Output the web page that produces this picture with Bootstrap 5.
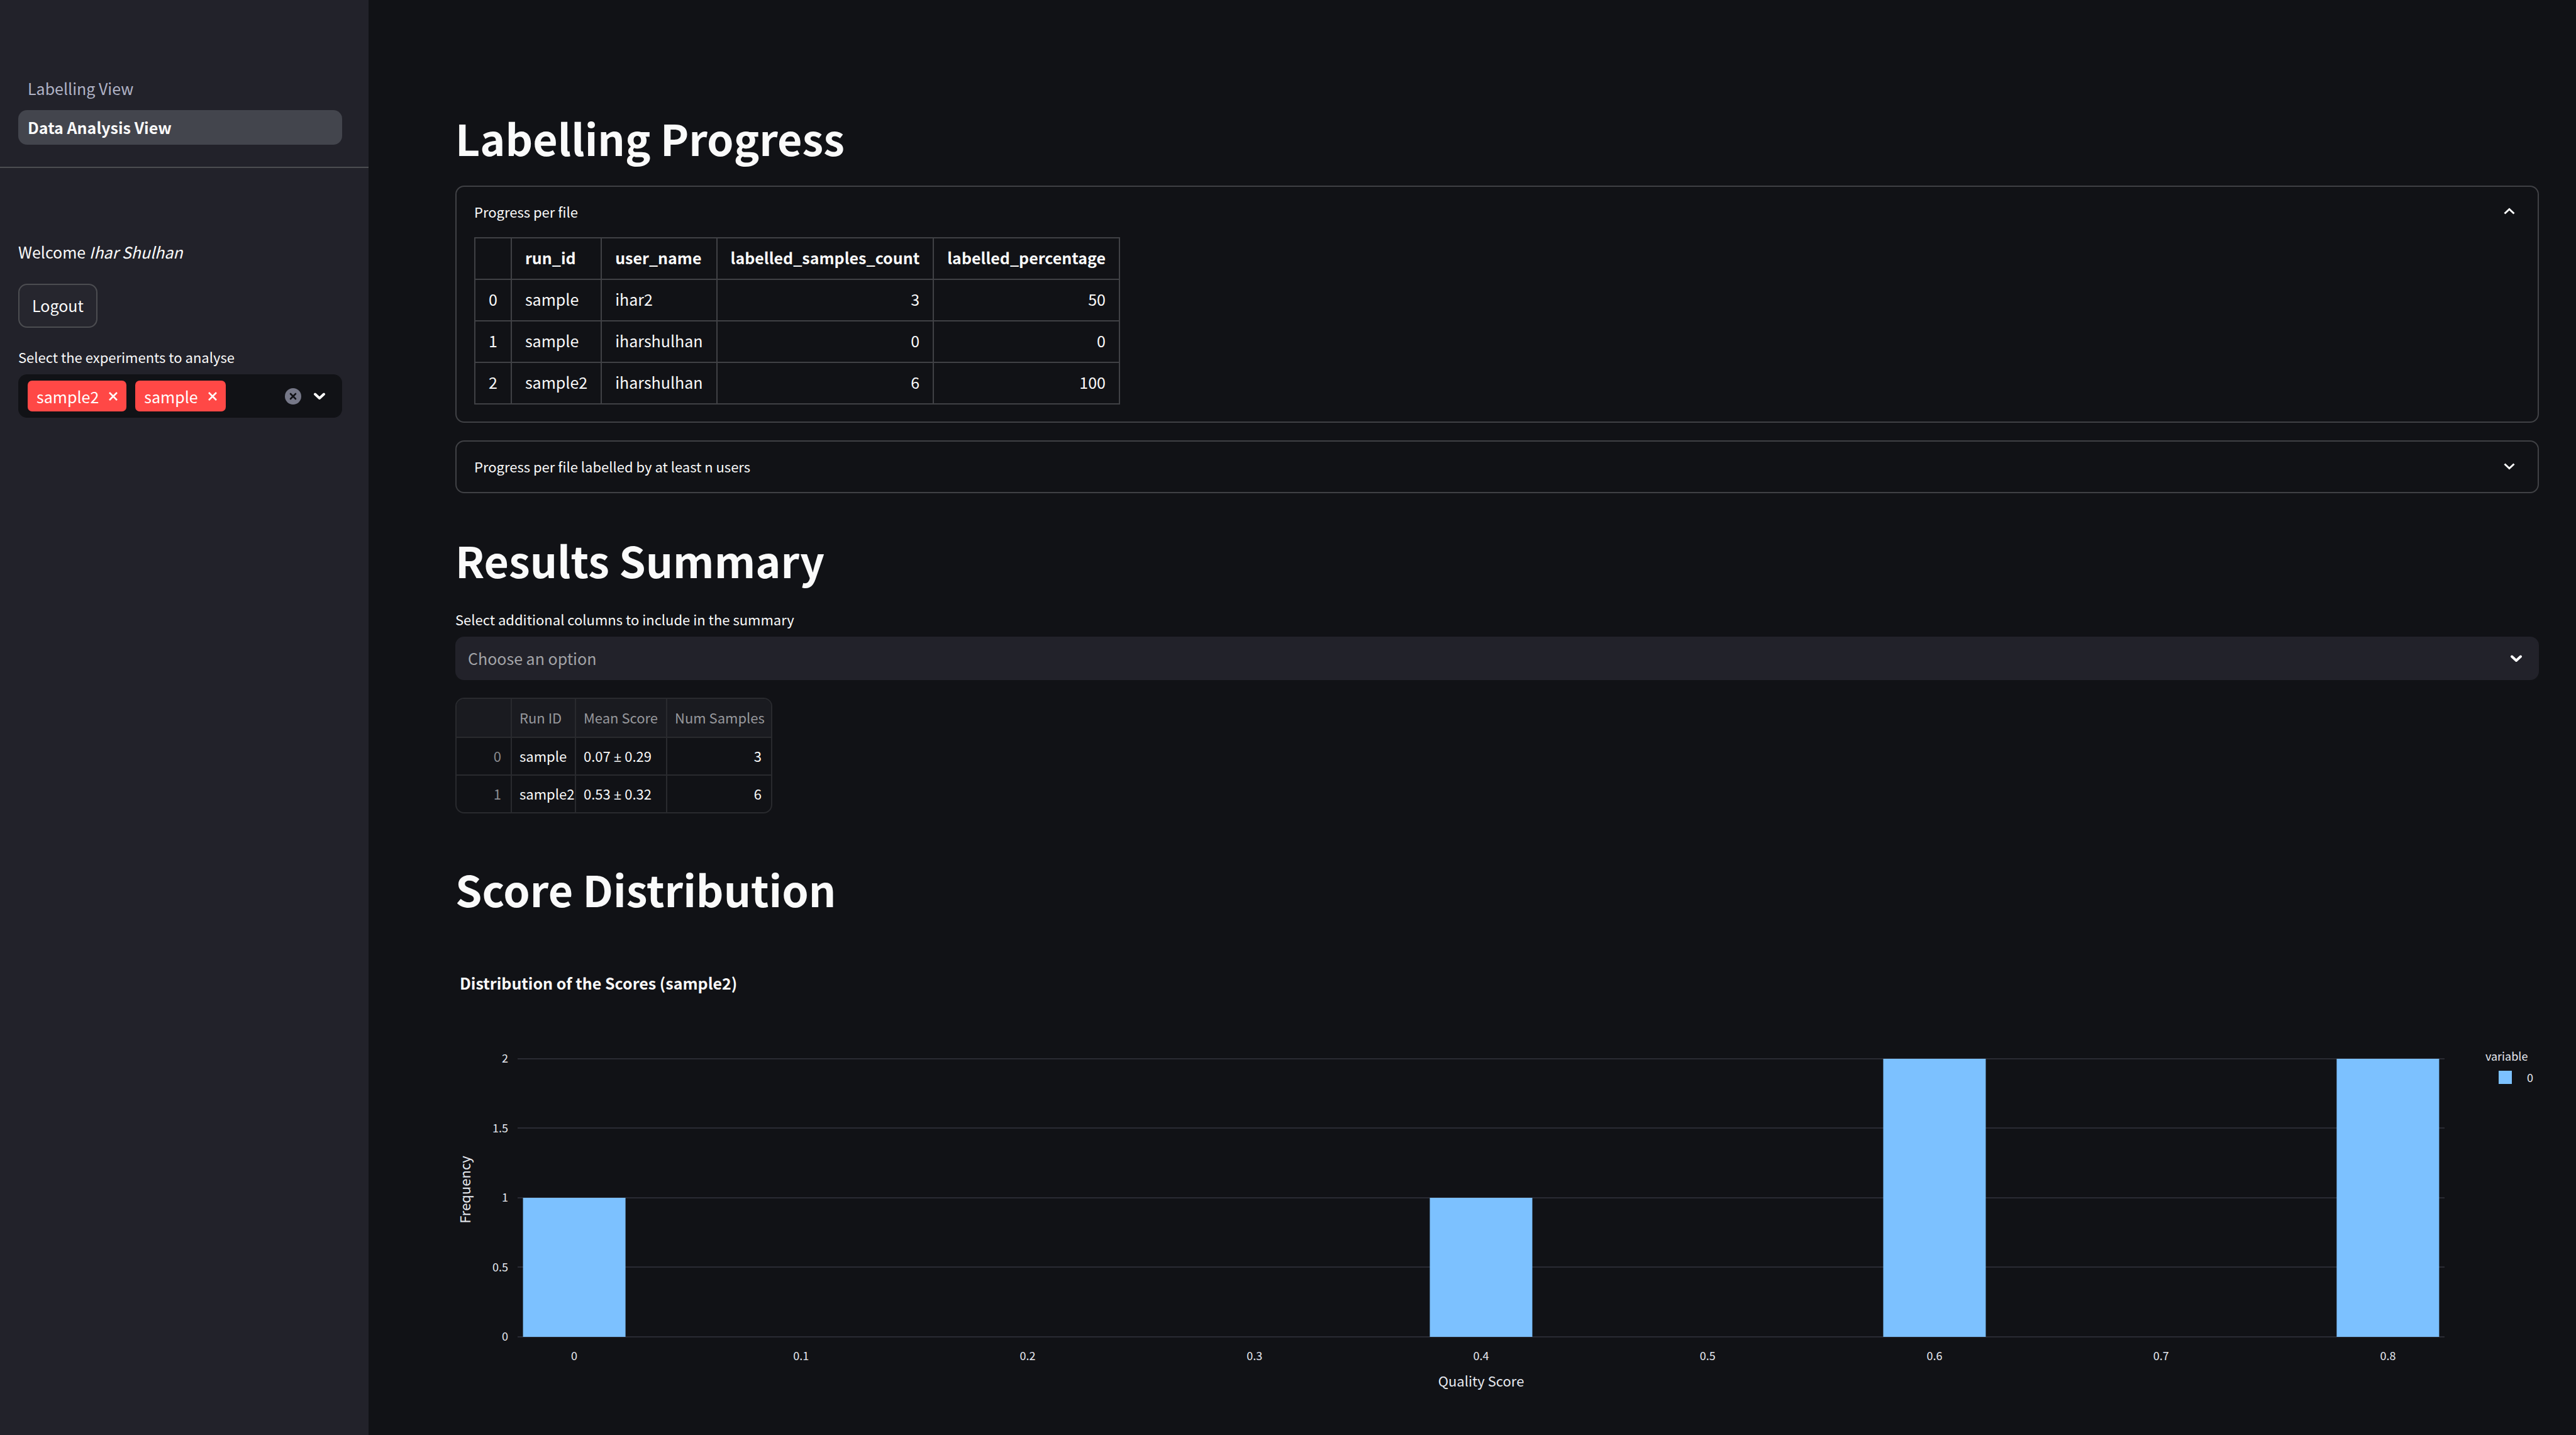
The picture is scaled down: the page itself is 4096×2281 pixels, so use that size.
<!DOCTYPE html>
<html lang="en">
<head>
<meta charset="utf-8">
<meta name="viewport" content="width=device-width, initial-scale=1">
<title>Data Analysis View</title>
<link href="https://cdn.jsdelivr.net/npm/bootstrap@5.3.0/dist/css/bootstrap.min.css" rel="stylesheet">
<style>
:root { --page: #111216; --panel: #22222a; --rule: #404145; --ink: #fafafa; --accent: #ff4846; --bar: #7cc1ff; }
body { background: var(--page); color: var(--ink); font-family: "Noto Sans CJK SC", "Noto Sans", sans-serif; font-size: 25px; line-height: 38px; }
.side-panel { flex: 0 0 586px; min-width: 0; background: var(--panel); }
.side-nav { padding: 113px 42px 35px 29px; border-bottom: 2px solid #4c4d51; }
.side-nav .nav-link { color: #b0b3c6; padding: 8px 15px; line-height: 39px; border-radius: 14px; }
.side-nav .nav-link + .nav-link { margin-top: 7px; }
.side-nav .nav-link.active { background: #43454d; color: var(--ink); font-weight: 700; }
.side-body { padding: 114px 42px 0 29px; }
.logout-btn { color: var(--ink); background: #26262e; border: 2px solid #4c4d51; border-radius: 14px; font-size: 25px; line-height: 38px; padding: 13px 20px 15px; margin: 32px 0 28px; }
.small-label { font-size: 22px; line-height: 36px; margin-bottom: 10px; }
.multi-box { height: 69px; background: var(--page); border-radius: 14px; padding: 0 27px 0 15px; }
.multi-box input { width: 0; min-width: 0; background: transparent; border: 0; outline: 0; color: var(--ink); }
.tag-chip { height: 49px; background: var(--accent); color: #fff; border-radius: 7px; padding: 0 14px; margin-right: 14px; gap: 16px; }
.plain-btn { background: none; border: 0; padding: 0; color: inherit; }
.plain-btn svg, .expander svg { display: block; }
.main-area { padding: 173px 59px 40px 138px; min-width: 0; }
.page-title { font-size: 68px; line-height: 92px; font-weight: 700; margin: 0 0 30px; }
.expander { border: 2px solid var(--rule); border-radius: 14px; margin-bottom: 28px; }
.expander-head { width: 100%; height: 80px; padding: 0 36px 3px 28px; background: none; border: 0; color: var(--ink); font-size: 22px; line-height: 36px; }
.expander-body { padding: 0 28px 27px; }
.expander + .page-title { margin-top: 60px; }
.progress-grid { border-collapse: collapse; }
.progress-grid th, .progress-grid td { border: 2px solid var(--rule); padding: 11px 21px 15px; line-height: 38px; }
.num-cell { text-align: right; }
.column-select { height: 69px; background-color: var(--panel); color: #a3a4a8; border: 0; border-radius: 14px; font-size: 25px; line-height: 38px; padding: 0 60px 2px 20px; background-size: 18px 12px; background-position: right 27px center;
 background-image: url("data:image/svg+xml,%3csvg xmlns='http://www.w3.org/2000/svg' viewBox='0 0 18 12'%3e%3cpath d='M2 2.5L9 9L16 2.5' fill='none' stroke='%23fff' stroke-width='4' stroke-linecap='round' stroke-linejoin='round'/%3e%3c/svg%3e"); }
.summary-frame { border: 2px solid #292a2e; border-radius: 14px; overflow: hidden; margin: 28px 0 74px; }
.summary-grid { table-layout: fixed; width: 500px; border-collapse: separate; border-spacing: 0; font-size: 22px; line-height: 38px; }
.summary-grid th, .summary-grid td { padding: 9px 0 11px 12px; white-space: nowrap; border-right: 2px solid #292a2e; border-bottom: 2px solid #292a2e; font-weight: 400; }
.summary-grid thead th { background: #1a1b20; color: #97989c; padding-top: 10px; padding-bottom: 12px; }
.summary-grid tbody th { color: #8b8c90; }
.summary-grid tr > :last-child { border-right: 0; }
.summary-grid tbody tr:last-child > * { border-bottom: 0; }
.summary-grid .num-cell { padding-right: 15px; }
.col-index { width: 88px; }
.col-run { width: 102px; }
.col-score { width: 145px; }
.pm-sign { font-family: "Open Sans", sans-serif; line-height: 1; }
.chart-title { font-size: 25px; line-height: 38px; font-weight: 700; margin: 84px 0 101px 7px; }
.axis-name { font-size: 22px; fill: #e6e9f0; }
.tick-name { font-size: 18px; fill: #e6e9f0; }
.chart-box svg { display: block; overflow: visible; }
.y-side { flex: 0 0 99px; }
.legend-side { flex: 0 0 150px; padding-left: 65px; font-size: 18px; line-height: 30px; color: #e6e9f0; }
.legend-name { margin: -19px 0 4px; }
.legend-row { padding-left: 21px; gap: 24px; }
.legend-key { width: 21px; height: 21px; background: var(--bar); }
</style>
</head>
<body>
<div class="d-flex min-vh-100">
  <aside class="side-panel">
    <nav class="side-nav nav flex-column">
      <a class="nav-link" href="#">Labelling View</a>
      <a class="nav-link active" href="#" aria-current="page">Data Analysis View</a>
    </nav>
    <div class="side-body">
      <div>Welcome <em>Ihar Shulhan</em></div>
      <button type="button" class="logout-btn btn">Logout</button>
      <label class="small-label d-block" for="experiments">Select the experiments to analyse</label>
      <div class="multi-box d-flex align-items-center">
        <span class="tag-chip d-flex align-items-center">sample2
          <button type="button" class="plain-btn" aria-label="Remove sample2"><svg width="14" height="14" viewBox="0 0 14 14"><path d="M1 1L13 13M13 1L1 13" stroke="#fff" stroke-width="2.6"/></svg></button></span>
        <span class="tag-chip d-flex align-items-center">sample
          <button type="button" class="plain-btn" aria-label="Remove sample"><svg width="14" height="14" viewBox="0 0 14 14"><path d="M1 1L13 13M13 1L1 13" stroke="#fff" stroke-width="2.6"/></svg></button></span>
        <input id="experiments" class="flex-fill" type="text">
        <button type="button" class="plain-btn" aria-label="Clear all"><svg width="26" height="26" viewBox="0 0 26 26"><circle cx="13" cy="13" r="13" fill="#767888"/><path d="M9 9L17 17M17 9L9 17" stroke="#111216" stroke-width="2.6" stroke-linecap="round"/></svg></button>
        <button type="button" class="plain-btn ms-3 ps-1" aria-label="Open list"><svg width="18" height="12" viewBox="0 0 18 12"><path d="M2 2.5L9 9L16 2.5" fill="none" stroke="#fff" stroke-width="4" stroke-linecap="round" stroke-linejoin="round"/></svg></button>
      </div>
    </div>
  </aside>

  <main class="main-area flex-fill">
    <h1 class="page-title">Labelling Progress</h1>
    <section class="expander">
      <button type="button" class="expander-head d-flex align-items-center justify-content-between" aria-expanded="true">Progress per file
        <svg width="18" height="12" viewBox="0 0 18 12"><path d="M1.5 9.5L9 2.5L16.5 9.5" fill="none" stroke="#fff" stroke-width="3"/></svg></button>
      <div class="expander-body">
        <table class="progress-grid">
          <thead><tr><th></th><th>run_id</th><th>user_name</th><th class="num-cell">labelled_samples_count</th><th class="num-cell">labelled_percentage</th></tr></thead>
          <tbody>
            <tr><td>0</td><td>sample</td><td>ihar2</td><td class="num-cell">3</td><td class="num-cell">50</td></tr>
            <tr><td>1</td><td>sample</td><td>iharshulhan</td><td class="num-cell">0</td><td class="num-cell">0</td></tr>
            <tr><td>2</td><td>sample2</td><td>iharshulhan</td><td class="num-cell">6</td><td class="num-cell">100</td></tr>
          </tbody>
        </table>
      </div>
    </section>
    <section class="expander">
      <button type="button" class="expander-head d-flex align-items-center justify-content-between" aria-expanded="false">Progress per file labelled by at least n users
        <svg width="18" height="12" viewBox="0 0 18 12"><path d="M1.5 2.5L9 9.5L16.5 2.5" fill="none" stroke="#fff" stroke-width="3"/></svg></button>
    </section>

    <h1 class="page-title">Results Summary</h1>
    <label class="small-label d-block" for="columns">Select additional columns to include in the summary</label>
    <select id="columns" class="form-select column-select"><option>Choose an option</option></select>
    <div class="d-inline-block align-top summary-frame">
      <table class="summary-grid">
        <colgroup><col class="col-index"><col class="col-run"><col class="col-score"><col></colgroup>
        <thead><tr><th></th><th>Run ID</th><th>Mean Score</th><th>Num Samples</th></tr></thead>
        <tbody>
          <tr><th class="num-cell">0</th><td>sample</td><td>0.07 <span class="pm-sign">±</span> 0.29</td><td class="num-cell">3</td></tr>
          <tr><th class="num-cell">1</th><td>sample2</td><td>0.53 <span class="pm-sign">±</span> 0.32</td><td class="num-cell">6</td></tr>
        </tbody>
      </table>
    </div>

    <h1 class="page-title">Score Distribution</h1>
    <div class="chart-title">Distribution of the Scores (sample2)</div>
    <div class="chart-box d-flex">
      <svg class="y-side" width="99" height="530">
        <text class="axis-name" transform="translate(24 209) rotate(-90)" text-anchor="middle">Frequency</text>
        <g class="tick-name" text-anchor="end">
          <text x="84" y="7">2</text><text x="84" y="118">1.5</text><text x="84" y="228">1</text><text x="84" y="339">0.5</text><text x="84" y="449">0</text>
        </g>
      </svg>
      <div class="flex-fill">
        <svg width="100%" height="530" role="img" aria-label="Histogram of quality scores">
          <g fill="#2a2b33">
            <rect y="0" width="100%" height="2"/><rect y="110" width="100%" height="2"/><rect y="221" width="100%" height="2"/><rect y="331" width="100%" height="2"/><rect y="442" width="100%" height="2"/>
          </g>
          <g fill="#7cc1ff">
            <rect x="0.28%" y="222" width="5.32%" height="221"/>
            <rect x="47.34%" y="222" width="5.32%" height="221"/>
            <rect x="70.87%" y="1" width="5.32%" height="442"/>
            <rect x="94.4%" y="1" width="5.32%" height="442"/>
          </g>
          <g class="tick-name" text-anchor="middle">
            <text x="2.94%" y="480">0</text><text x="14.71%" y="480">0.1</text><text x="26.47%" y="480">0.2</text><text x="38.24%" y="480">0.3</text><text x="50%" y="480">0.4</text><text x="61.76%" y="480">0.5</text><text x="73.53%" y="480">0.6</text><text x="85.29%" y="480">0.7</text><text x="97.06%" y="480">0.8</text>
          </g>
          <text class="axis-name" x="50%" y="522" text-anchor="middle">Quality Score</text>
        </svg>
      </div>
      <div class="legend-side">
        <div class="legend-name">variable</div>
        <div class="legend-row d-flex align-items-center"><span class="legend-key"></span><span>0</span></div>
      </div>
    </div>
  </main>
</div>
<script src="https://cdn.jsdelivr.net/npm/bootstrap@5.3.0/dist/js/bootstrap.bundle.min.js"></script>
</body>
</html>
